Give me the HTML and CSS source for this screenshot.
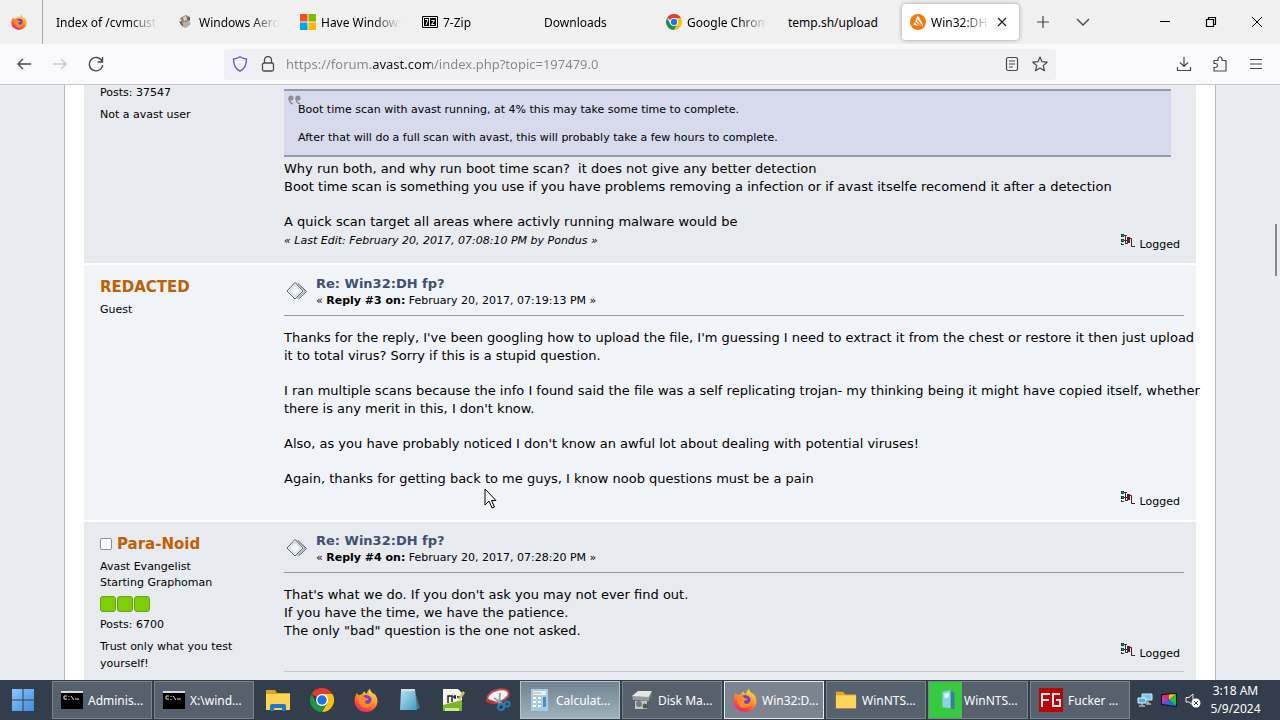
FILE: index.html
```html
<!DOCTYPE html>
<html lang="en">
<head>
<meta charset="utf-8">
<title>Win32:DH fp?</title>
<link rel="stylesheet" href="styles.css">
</head>
<body>
<svg class="defs" aria-hidden="true">
  <defs>
    <linearGradient id="fox" x1="0.8" y1="0" x2="0.3" y2="1"><stop offset="0" stop-color="#ffe14a"/><stop offset="0.45" stop-color="#ff9a2b"/><stop offset="0.75" stop-color="#ff4b3e"/><stop offset="1" stop-color="#e8247d"/></linearGradient>
    <linearGradient id="pane" x1="0" y1="0" x2="1" y2="1"><stop offset="0" stop-color="#8cc8f8"/><stop offset="1" stop-color="#3f8be0"/></linearGradient>
    <linearGradient id="note" x1="0" y1="0" x2="1" y2="1"><stop offset="0" stop-color="#b8e6f4"/><stop offset="1" stop-color="#4299bf"/></linearGradient>
    <symbol id="firefox" viewBox="0 0 24 24">
      <path fill="url(#fox)" d="M3 5l1.500 2.400C6 6.500 7 6.300 8 6.400 8.500 5 9.500 4 11 3.500c0 1 .5 1.800 1.500 2.500C13.500 3.500 14.500 2 16 .5c.3 2.500 2 4 3.500 5.500l.8-.5C22.500 8 23.500 10.500 23.500 13A11.500 11 0 0 1 .5 13C.5 10 1.500 7 3 5z"/>
      <circle cx="12" cy="13" r="6" fill="#7043c9"/>
      <path fill="#ff8b28" d="M5 8c3-1 5 0 6.500 2.200 1.500 0 2.500.3 3 1-1 1.200-2.500 1-3.300 2-.8 1.500 1 3.200 3.200 2.600 2-.6 3.200-2.400 3-4.800 2 3 .6 8-4.400 9-6 1-10-5-8-12z"/>
    </symbol>
    <symbol id="chrome" viewBox="0 0 24 24">
      <path fill="#e33b2e" d="M12 12L1.600 6A12 12 0 0 1 22.400 6z"/>
      <path fill="#fbc116" d="M12 12V6h10.400A12 12 0 0 1 12 24l5.200-9z"/>
      <path fill="#229342" d="M12 12l5.200 3L12 24A12 12 0 0 1 1.600 6l5.200 9z"/>
      <circle cx="12" cy="12" r="6" fill="#fff"/><circle cx="12" cy="12" r="4.700" fill="#1a73e8"/>
    </symbol>
    <symbol id="cmd" viewBox="0 0 22 18"><path fill="#000" d="M0 0h22v18H0z"/><path fill="#d9d9d9" d="M0 0h22v2H0z"/><path d="M6 5H3v3h3M8 5v1M8 8v1M10 5l3 4M14 8h4" fill="none" stroke="#ddd"/></symbol>
    <symbol id="folder" viewBox="0 0 24 20"><path fill="#e2a91d" d="M1 1h8l2 3h12v15H1z"/><path fill="#ffd45c" d="M1 5h22v14H1z"/></symbol>
    <symbol id="post" viewBox="0 0 22 20"><path d="M9 1.500l8 8.500-8 8-8-8z" fill="#f3f5f7" stroke="#525e68"/><path d="M9 4l5.500 6L9 15.500 3.500 10z" fill="none" stroke="#c3cad0"/><path d="M12 2.500l8.500 8-8 7.500" fill="none" stroke="#525e68"/><path d="M10.500 2l8.500 8-8 7.500" fill="none" stroke="#95a0aa"/></symbol>
    <symbol id="ip" viewBox="0 0 16 16"><path d="M1 1.500h3M1 3.500h3M1 6.500h3M1 8.500h3M1 11.500h3M1.500 1v3M1.500 6v3M1.500 10v2M4 2.500h3M4 7.500h3M5 10.500h3M5.500 3v7" fill="none" stroke="#213b33"/><path d="M2 2h2v1H2zM2 7h2v1H2z" fill="#0aa06a"/><path d="M7 4h3v6H7z" fill="#641d20"/><path d="M10 5.500h1.500v8H15" fill="none" stroke="#4b1a1d"/></symbol>
    <symbol id="win" viewBox="0 0 22 22"><path fill="url(#pane)" d="M0 0h10.500v10.500H0zM11.500 0H22v10.500H11.500zM0 11.500h10.500V22H0zM11.500 11.500H22V22H11.500z"/></symbol>
  </defs>
</svg>
<div class="screen">
  <header class="tabs">
    <button class="pinned" aria-label="Firefox"><svg width="16" height="16"><use href="#firefox"/></svg></button>
    <button class="tab"><span class="tab-title">Index of /cvmcustom</span></button>
    <button class="tab"><svg width="16" height="16" viewBox="0 0 16 16"><path d="M2 4l6-3 4 2-1 5-7 1z" fill="#928477"/><path d="M5 3l3-1 1 4-3 1z" fill="#d9d2c7"/><path d="M3 9l8-2 2 3-5 4-4-1z" fill="#b7afa5"/><path d="M1 7l3 1 1 4-2-1zM9 4l3-1v4z" fill="#615a54"/></svg><span class="tab-title">Windows Aero themes</span></button>
    <button class="tab"><svg width="16" height="16" viewBox="0 0 16 16"><path fill="#f25022" d="M0 0h7.500v7.500H0z"/><path fill="#7fba00" d="M8.500 0H16v7.500H8.500z"/><path fill="#00a4ef" d="M0 8.500h7.500V16H0z"/><path fill="#ffb900" d="M8.500 8.500H16V16H8.500z"/></svg><span class="tab-title">Have Windows run</span></button>
    <button class="tab"><svg width="16" height="16" viewBox="0 0 16 16"><path d="M.5 2.500h15v11H.5z" fill="#fff" stroke="#000"/><path d="M2 4h5v8H2zM8 4h6v8H8z"/><path d="M3 5.500h3L4 11M9.500 6.500h3l-3 4h3" stroke="#fff" fill="none"/></svg><span class="tab-title">7-Zip</span></button>
    <button class="tab"><span class="tab-title">Downloads</span></button>
    <button class="tab"><svg width="16" height="16"><use href="#chrome"/></svg><span class="tab-title">Google Chrome 109</span></button>
    <button class="tab"><span class="tab-title plain">temp.sh/upload</span></button>
    <div class="tab active"><svg width="16" height="16" viewBox="0 0 16 16"><circle cx="8" cy="8" r="8" fill="#f27a0c"/><path d="M3 11c1-1 3-5 4-8 .6-1 1.600-.8 2 0l4 8c.3 1-.7 1.500-1.500 1z" fill="#fff"/><path d="M7 6l5 6M5 8l5 4" stroke="#f27a0c" stroke-width="1.300"/></svg><span class="tab-title">Win32:DH fp?</span><button class="close" aria-label="Close tab"><svg width="10" height="10" viewBox="0 0 10 10"><path d="M1 1l8 8M9 1L1 9" stroke="#222" stroke-width="1.200"/></svg></button></div>
    <button class="strip-btn" aria-label="New tab"><svg width="14" height="14" viewBox="0 0 14 14"><path d="M7 1v12M1 7h12" stroke="#444" stroke-width="1.200"/></svg></button>
    <button class="strip-btn" aria-label="List all tabs"><svg width="14" height="14" viewBox="0 0 14 14"><path d="M1 4l6 6 6-6" fill="none" stroke="#444" stroke-width="1.300"/></svg></button>
    <div class="window-buttons">
      <button aria-label="Minimize"><svg width="12" height="12" viewBox="0 0 12 12"><path d="M1 5.500h10" stroke="#000"/></svg></button>
      <button aria-label="Restore"><svg width="12" height="12" viewBox="0 0 12 12"><path d="M1.500 3.500h7v7h-7zM3.500 3.500v-2h7v7h-2" fill="none" stroke="#000" stroke-width="1.200"/></svg></button>
      <button aria-label="Close"><svg width="12" height="12" viewBox="0 0 12 12"><path d="M1 1l10 10M11 1L1 11" stroke="#000"/></svg></button>
    </div>
  </header>
  <nav class="toolbar">
    <div class="nav-buttons">
      <button aria-label="Back"><svg width="16" height="16" viewBox="0 0 16 16"><path d="M15 8H2M7 3L2 8l5 5" fill="none" stroke="#48484f" stroke-width="1.300"/></svg></button>
      <button aria-label="Forward" disabled><svg width="16" height="16" viewBox="0 0 16 16"><path d="M1 8h13M9 3l5 5-5 5" fill="none" stroke="#c8c8cc" stroke-width="1.300"/></svg></button>
      <button aria-label="Reload"><svg width="16" height="16" viewBox="0 0 16 16"><path d="M14 5A6.700 6.700 0 1 0 14.700 9M14.500 1v5h-5" fill="none" stroke="#48484f" stroke-width="1.400"/></svg></button>
    </div>
    <div class="url">
      <svg width="16" height="16" viewBox="0 0 16 16"><path d="M8 .8c2 1.400 4 2 6.500 2.200C14.500 9 12.500 13 8 15.200 3.500 13 1.500 9 1.500 3 4 2.800 6 2.200 8 .8z" fill="none" stroke="#5959b8" stroke-width="1.300"/></svg>
      <svg width="16" height="16" viewBox="0 0 16 16"><rect x="2.500" y="7" width="11" height="8" rx="1.500" fill="none" stroke="#48484f" stroke-width="1.300"/><path d="M4.500 7V4a3.500 3.500 0 0 1 7 0v3" fill="none" stroke="#48484f" stroke-width="1.300"/></svg>
      <input type="text" aria-label="Address" value="https://forum.avast.com/index.php?topic=197479.0">
      <button aria-label="Reader view"><svg width="16" height="16" viewBox="0 0 16 16"><rect x="2.500" y="1.500" width="11" height="13" rx="1.500" fill="none" stroke="#48484f" stroke-width="1.200"/><path d="M5 5h6M5 8h6M5 11h4" stroke="#48484f" stroke-width="1.200"/></svg></button>
      <button aria-label="Bookmark"><svg width="16" height="16" viewBox="0 0 16 16"><path d="M8 1l2 4.700 5.200.5-4 3.400 1.300 5.100L8 12l-4.500 2.700 1.300-5.100-4-3.400L6 5.700z" fill="none" stroke="#48484f" stroke-width="1.200" stroke-linejoin="round"/></svg></button>
    </div>
    <div class="menu-buttons">
      <button aria-label="Downloads"><svg width="16" height="16" viewBox="0 0 16 16"><path d="M8 1v9M4 6.500l4 4 4-4M1.500 11v3.500h13V11" fill="none" stroke="#48484f" stroke-width="1.200"/></svg></button>
      <button aria-label="Extensions"><svg width="16" height="16" viewBox="0 0 16 16"><path d="M2 7V4.500h4V3a2 2 0 0 1 4 0v1.500h4v10.500H2v-3.500h1.500a2 2 0 0 0 0-4H2z" fill="none" stroke="#48484f" stroke-width="1.200"/></svg></button>
      <button aria-label="Menu"><svg width="16" height="16" viewBox="0 0 16 16"><path d="M2 3.500h12M2 8h12M2 12.500h12" stroke="#48484f" stroke-width="1.200"/></svg></button>
    </div>
  </nav>
  <main class="viewport">
    <div class="wrapper">
      <article class="post grey first">
        <aside class="poster"><p>Posts: 37547</p><p class="note">Not a avast user</p></aside>
        <div class="content">
          <blockquote><p>Boot time scan with avast running, at 4% this may take some time to complete.</p><p>After that will do a full scan with avast, this will probably take a few hours to complete.</p>
            <svg class="marks" width="13" height="10" viewBox="0 0 13 10"><g id="m"><circle cx="3" cy="3" r="2.600" fill="#8e8e9b"/><path d="M1 3c0 3 1 5 4 6" fill="none" stroke="#8e8e9b" stroke-width="1.500"/></g><use href="#m" x="7"/></svg>
          </blockquote>
          <div class="message"><p>Why run both, and why run boot time scan?&nbsp; it does not give any better detection<br>Boot time scan is something you use if you have problems removing a infection or if avast itselfe recomend it after a detection</p><p>A quick scan target all areas where activly running malware would be</p></div>
          <footer class="foot"><em>« Last Edit: February 20, 2017, 07:08:10 PM by Pondus »</em><span class="logged"><svg width="16" height="16"><use href="#ip"/></svg>Logged</span></footer>
        </div>
      </article>
      <article class="post blue">
        <aside class="poster"><h4>REDACTED</h4><p>Guest</p></aside>
        <div class="content">
          <div class="heading"><svg width="22" height="20"><use href="#post"/></svg><div><h5><a href="#r3">Re: Win32:DH fp?</a></h5><p>« <b>Reply #3 on:</b> February 20, 2017, 07:19:13 PM »</p></div></div>
          <div class="message"><p>Thanks for the reply, I've been googling how to upload the file, I'm guessing I need to extract it from the chest or restore it then just upload<br>it to total virus? Sorry if this is a stupid question.</p><p>I ran multiple scans because the info I found said the file was a self replicating trojan- my thinking being it might have copied itself, whether<br>there is any merit in this, I don't know.</p><p>Also, as you have probably noticed I don't know an awful lot about dealing with potential viruses!</p><p>Again, thanks for getting back to me guys, I know noob questions must be a pain</p></div>
          <footer class="foot"><span class="logged"><svg width="16" height="16"><use href="#ip"/></svg>Logged</span></footer>
        </div>
      </article>
      <article class="post grey">
        <aside class="poster"><h4><input type="checkbox" aria-label="Para-Noid status"><a href="#pn">Para-Noid</a></h4><p>Avast Evangelist</p><p>Starting Graphoman</p><div class="stars"><i></i><i></i><i></i></div><p>Posts: 6700</p><p class="note">Trust only what you test yourself!</p></aside>
        <div class="content">
          <div class="heading"><svg width="22" height="20"><use href="#post"/></svg><div><h5><a href="#r4">Re: Win32:DH fp?</a></h5><p>« <b>Reply #4 on:</b> February 20, 2017, 07:28:20 PM »</p></div></div>
          <div class="message"><p>That's what we do. If you don't ask you may not ever find out.<br>If you have the time, we have the patience.<br>The only "bad" question is the one not asked.</p></div>
          <footer class="foot"><span class="logged"><svg width="16" height="16"><use href="#ip"/></svg>Logged</span></footer>
          <div class="signature"></div>
        </div>
      </article>
    </div>
    <div class="scroll-thumb"></div>
  </main>
  <footer class="taskbar">
    <button class="start" aria-label="Start"><svg width="22" height="22"><use href="#win"/></svg></button>
    <button class="task"><svg width="22" height="18"><use href="#cmd"/></svg><span>Adminis...</span></button>
    <button class="task"><svg width="22" height="18"><use href="#cmd"/></svg><span>X:\wind...</span></button>
    <div class="launch">
      <button aria-label="File Explorer"><svg width="26" height="24" viewBox="0 0 26 24"><path fill="#dca31c" d="M1 2h9l2 3h13v17H1z"/><path fill="#ffd254" d="M1 6h24v16H1z"/><path fill="#1b78cf" d="M5 23v-5q0-2 2-2h12q2 0 2 2v5h-4v-3H9v3z"/></svg></button>
      <button aria-label="Chrome"><svg width="24" height="24"><use href="#chrome"/></svg></button>
      <button aria-label="Firefox"><svg width="24" height="24"><use href="#firefox"/></svg></button>
      <button aria-label="Notepad"><svg width="24" height="24" viewBox="0 0 24 24"><path d="M17 3l5 17-5 2z" fill="#4d7386"/><path d="M3 2h14l2 20H2z" fill="url(#note)"/><path d="M3 1h14v2H3z" fill="#ddd"/></svg></button>
      <button aria-label="Notepad++"><svg width="24" height="24" viewBox="0 0 24 24"><path d="M1 1h15l4 4v18H1z" fill="#f5f5ee"/><path d="M1 17l19-5v11H1z" fill="#7ab52c"/><path d="M3 20h14v3H3z" fill="#d2e68f"/><path d="M6 15V8h4v6M11 9h3M13 7v4M15 9h4" stroke="#222" stroke-width="1.500" fill="none"/><path d="M16 11l5-8 2 2-5 7z" fill="#d9bb48"/></svg></button>
      <button aria-label="Snipping Tool"><svg width="26" height="24" viewBox="0 0 26 24"><ellipse cx="13" cy="8" rx="11" ry="6" transform="rotate(-18 13 8)" fill="#f8f3f3" stroke="#cc4850" stroke-width="2"/><path d="M9 10l10 7M15 5l-1 13" stroke="#9ba2a8" stroke-width="2"/><circle cx="16" cy="19" r="3" fill="none" stroke="#217fb5" stroke-width="2"/><circle cx="22" cy="16" r="2.500" fill="none" stroke="#217fb5" stroke-width="2"/><path d="M1 12l9 3" stroke="#b9383e" stroke-width="3"/></svg></button>
    </div>
    <button class="task calc"><svg width="22" height="24" viewBox="0 0 22 24"><path d="M2 1h17v22H2z" fill="#a5cde3"/><path d="M4 3h13v4H4z" fill="#eaf3f7"/><path d="M4 9h3v2H4zM9 9h3v2H9zM4 13h3v2H4zM9 13h3v2H9zM4 17h3v2H4zM9 17h3v2H9z" fill="#fff"/><path d="M14 9h3v10h-3z" fill="#4b91bd"/><path d="M4 5h8" stroke="#d5a46b"/></svg><span>Calculat...</span></button>
    <button class="task"><svg width="22" height="22" viewBox="0 0 22 22"><path d="M1 7l6-5h14l-3 6H5z" fill="#e5e5e2"/><path d="M1 7l17 1v4L2 11z" fill="#989b9b"/><path d="M4 12h12v8H4z" fill="#c6c7c5"/><circle cx="8" cy="15" r="3" fill="#777b7d"/><circle cx="14" cy="17" r="2.500" fill="#54595c"/><path d="M18 8l3-6v5l-3 5z" fill="#71777a"/></svg><span>Disk Ma...</span></button>
    <button class="task current"><svg width="24" height="24"><use href="#firefox"/></svg><span>Win32:D...</span></button>
    <button class="task"><svg width="22" height="20"><use href="#folder"/></svg><span>WinNTS...</span></button>
    <button class="task progress"><svg width="22" height="24" viewBox="0 0 24 24"><path d="M6 3l9-2v20l-9-1z" fill="#8fd2e5"/><path d="M15 1l4 3v18l-4-1z" fill="#377e9b"/><path d="M8 5l5-1v5l-5 1z" fill="#d9f2f8"/></svg><span>WinNTS...</span></button>
    <button class="task"><svg width="24" height="24" viewBox="0 0 24 24"><path fill="#b80708" d="M0 0h24v24H0z"/><path d="M3 19V6h8M3 12h7M21 6h-7v12h7v-6h-4" fill="none" stroke="#f5e4e4" stroke-width="2"/></svg><span>Fucker ...</span></button>
    <div class="tray">
      <button aria-label="Network"><svg width="16" height="16" viewBox="0 0 16 16"><path d="M5 2h10v6H5z" fill="#70c6ee" stroke="#d7eaf2"/><path d="M1 6h8v5H1z" fill="#4fb1e0" stroke="#eaf5fa"/><path d="M5 11v2M2 14h6M11 9v3M9 12h5" stroke="#eee"/></svg></button>
      <button aria-label="Display colors"><svg width="16" height="16" viewBox="0 0 16 16"><path d="M0 2l16-1v14L0 13z" fill="#111"/><path d="M1 3l7-.5V8z" fill="#ec2b47"/><path d="M8 2.500L15 2 8 8z" fill="#ffc219"/><path d="M15 2v12L8 8z" fill="#21c04a"/><path d="M8 8l7 6-14-2z" fill="#226df0"/><path d="M1 3l7 5-7 4z" fill="#c238c9"/></svg></button>
      <button aria-label="Volume muted"><svg width="16" height="16" viewBox="0 0 16 16"><path d="M1 5.500h3L8 2v11L4 10H1z" fill="none" stroke="#eee"/><circle cx="11" cy="11" r="4.500" fill="#fff"/><path d="M9 9l4 4M13 9l-4 4" stroke="#333b47"/></svg></button>
    </div>
    <div class="clock"><span>3:18 AM</span><span>5/9/2024</span></div>
  </footer>
  <svg class="cursor" width="13" height="21" viewBox="0 0 13 21"><path d="M1 1v16l4-4 3 7 2.500-1L7.500 12.500H12z" fill="#fff" stroke="#000"/></svg>
</div>
</body>
</html>
```
FILE: styles.css
```css
* { box-sizing: border-box; }
body { margin: 0; font-family: "DejaVu Sans", Verdana, sans-serif; color: #000; }
p, h4, h5, blockquote { margin: 0; }
button { border: 0; padding: 0; background: none; font: inherit; color: inherit; display: flex; align-items: center; justify-content: center; }
svg { flex: none; display: block; }
a { color: inherit; text-decoration: none; }
.defs { position: absolute; width: 0; height: 0; }
.screen { height: 100vh; display: flex; flex-direction: column; overflow: hidden; }

.tabs { flex: none; height: 44px; display: flex; background: #f0f0f0; font: 12px "Noto Sans", "Segoe UI", sans-serif; }
.pinned { flex: none; width: 43px; padding-right: 4px; border-right: 1px solid #a9a9a9; margin-right: 1px; }
.tab { flex: 0 1 122px; min-width: 0; padding: 0 9px 0 12px; gap: 5px; justify-content: flex-start; display: flex; align-items: center; }
.tab-title { flex: 1; min-width: 0; overflow: hidden; white-space: nowrap; text-align: left; mask-image: linear-gradient(to left, transparent, #000 28px); }
.tab-title.plain { mask-image: none; }
.tab.active { flex-basis: 117px; margin: 4px; padding: 0 10px 0 8px; background: #fff; border-radius: 4px; box-shadow: 0 0 4px #999; }
.close { width: 14px; height: 20px; }
.strip-btn { flex: none; width: 40px; }
.window-buttons { margin-left: auto; display: flex; }
.window-buttons button { width: 46px; }

.toolbar { flex: none; height: 41px; display: flex; align-items: center; background: #f9f9fb; border-bottom: 1px solid #c6c6cc; }
.nav-buttons { flex: none; width: 224px; display: flex; padding-left: 6px; }
.nav-buttons button { width: 36px; height: 32px; }
.url { flex: 1; height: 31px; display: flex; align-items: center; gap: 12px; padding: 0 8px; background: #f0f0f4; border-radius: 4px; }
.url input { flex: 1; min-width: 0; border: 0; padding: 0; margin-left: -2px; height: 24px; font: 13px "Noto Sans", "Segoe UI", sans-serif; color: #15141a; background: linear-gradient(to right, #85858b 85px, #15141a 85px, #15141a 145px, #85858b 145px); background-clip: text; -webkit-background-clip: text; -webkit-text-fill-color: transparent; }
.menu-buttons { flex: none; width: 224px; display: flex; justify-content: flex-end; padding-right: 6px; }
.menu-buttons button { width: 36px; height: 32px; }

.viewport { flex: 1; min-height: 0; overflow: hidden; position: relative; background: #e9edf2; padding: 0 64px; }
.wrapper { background: #fff; border: 1px solid #b8b8b8; border-width: 0 1px; padding: 0 19px; }
.post { display: grid; grid-template-columns: 184px minmax(0, 1fr); padding: 9px 12px 10px 16px; margin-bottom: 2px; }
.grey { background: #e7eaee; }
.blue { background: #f0f4f9; }
.first { padding-top: 0; }
.poster { font-size: 11px; line-height: 16px; padding-right: 24px; }
.poster h4 { font-size: 15px; line-height: 26px; color: #c06002; display: flex; align-items: center; gap: 5px; margin-bottom: 2px; }
.poster input { appearance: none; width: 12px; height: 12px; margin: 0; background: #fff; border: 1px solid #8f8f9d; border-radius: 2px; }
.poster .note { margin-top: 5px; line-height: 17px; }
.stars { display: flex; gap: 1px; padding: 5px 0; }
.stars i { width: 16px; height: 16px; border-radius: 3px; background: #80cc05; border: 1px solid #62a60a; }
.heading { display: flex; gap: 8px; padding: 1px 0 6px; border-bottom: 1px solid #8f949b; }
.heading svg { margin: 6px 0 0 2px; }
.heading h5 { font-size: 13px; line-height: 17px; color: #3f4f6f; }
.heading p { font-size: 11px; line-height: 17px; }
.message { font-size: 13px; line-height: 18px; display: flex; flex-direction: column; gap: 17px; }
.message p { white-space: nowrap; }
.heading + .message { padding-top: 13px; }
.foot { display: flex; justify-content: space-between; font-size: 11px; line-height: 20px; }
.logged { margin-left: auto; display: flex; align-items: center; gap: 4px; padding: 6px 4px 0 0; line-height: 16px; }
.logged svg { margin-top: -8px; }
.signature { border-top: 1px solid #c3c7cc; margin-top: 9px; height: 40px; }
blockquote { position: relative; margin: 4px 13px 3px 0; padding: 9px 14px 7px; background: #d7daec; border: solid #9999a9; border-width: 2px 0; font-size: 11px; line-height: 20px; display: flex; flex-direction: column; gap: 8px; }
.marks { position: absolute; left: 4px; top: 4px; }
.scroll-thumb { position: absolute; right: 3px; top: 139px; width: 2px; height: 52px; background: #85878b; }
.cursor { position: absolute; left: 484px; top: 488px; }

.taskbar { flex: none; height: 40px; display: flex; background: #333e4c; color: #fff; font: 12px "Noto Sans", "Segoe UI", sans-serif; }
.start { width: 46px; margin-right: 6px; }
.task { flex: 0 1 100px; min-width: 0; height: 38px; margin: 1px 2px 0 0; padding-left: 8px; gap: 5px; justify-content: flex-start; background: #57616d; border: 1px solid #7b858f; white-space: nowrap; overflow: hidden; }
.launch { display: flex; }
.launch button { width: 44px; }
.calc { background: linear-gradient(#71838f, #9db2bd); border-color: #b8c4cb; }
.current { background: #7c8490; border-color: #e8ebee; }
.progress { background: linear-gradient(to right, #37c940 33px, #57616d 33px); }
.tray { display: flex; padding-left: 1px; }
.tray button { width: 24px; }
.clock { flex: 1; display: flex; flex-direction: column; align-items: center; justify-content: center; line-height: 18px; padding-right: 14px; }
```
